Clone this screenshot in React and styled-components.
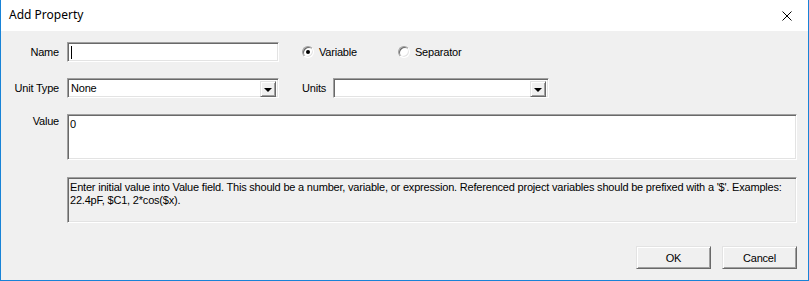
import React from "react";
import styled, { createGlobalStyle, css } from "styled-components";

const Global = createGlobalStyle`
  html, body { margin: 0; padding: 0; background: #ffffff; }
  * { box-sizing: border-box; }
`;

const FONT = `"Liberation Sans", Arial, sans-serif`;

const Window = styled.div`
  width: 809px;
  height: 281px;
  border: 1px solid #1883d7;
  border-top: none;
  display: flex;
  flex-direction: column;
  background: #f0f0f0;
  font-family: ${FONT};
  font-size: 11px;
  letter-spacing: -0.2px;
  color: #000;
`;

const TitleBar = styled.div`
  height: 31px;
  background: #fff;
  display: flex;
  align-items: center;
  justify-content: space-between;
  padding-left: 8px;
`;

const Title = styled.span`
  font-family: "Noto Sans", "Open Sans", sans-serif;
  font-size: 12px;
  letter-spacing: 0;
  color: #000;
  margin-top: -2px;
`;

const CloseBtn = styled.div`
  width: 46px;
  height: 31px;
  display: flex;
  align-items: center;
  justify-content: center;
  margin-right: -2px;
`;

const Body = styled.div`
  flex: 1;
  display: flex;
  flex-direction: column;
  padding: 11px 11px 0 0;
`;

const Row = styled.div`
  display: flex;
  align-items: ${(p) => (p.$top ? "flex-start" : "center")};
  margin-bottom: ${(p) => p.$mb || 0}px;
`;

const Label = styled.div`
  width: 58px;
  text-align: right;
  margin-right: 8px;
  padding-top: ${(p) => p.$pt || 0}px;
  white-space: nowrap;
`;

const sunken = css`
  border-style: solid;
  border-width: 1px;
  border-color: #a0a0a0 #ffffff #ffffff #a0a0a0;
  box-shadow: inset 1px 1px 0 #696969, inset -1px -1px 0 #e3e3e3;
`;

const Field = styled.div`
  ${sunken};
  width: ${(p) => p.$w}px;
  height: 20px;
  background: #fff;
  display: flex;
  align-items: center;
  padding-left: 3px;
  position: relative;
`;

const Caret = styled.span`
  display: block;
  width: 1px;
  height: 13px;
  background: #000;
`;

const DropBtn = styled.div`
  position: absolute;
  right: 2px;
  top: 2px;
  width: 16px;
  height: 16px;
  background: #f0f0f0;
  border-style: solid;
  border-width: 1px;
  border-color: #e3e3e3 #696969 #696969 #e3e3e3;
  box-shadow: inset 1px 1px 0 #fff, inset -1px -1px 0 #a0a0a0;
  display: flex;
  align-items: center;
  justify-content: center;
`;

const Arrow = styled.span`
  width: 0;
  height: 0;
  border-left: 4px solid transparent;
  border-right: 4px solid transparent;
  border-top: 4px solid #000;
  margin-top: 1px;
`;

const RadioGroup = styled.div`
  display: flex;
  align-items: center;
  margin-left: 23px;
`;

const RadioItem = styled.label`
  display: flex;
  align-items: center;
  margin-right: ${(p) => p.$mr || 0}px;
`;

const RadioCircle = styled.span`
  width: 12px;
  height: 12px;
  border-radius: 50%;
  background: #fff;
  border: 1px solid;
  border-color: #a0a0a0 #fff #fff #a0a0a0;
  box-shadow: inset 1px 1px 0 #696969, inset -1px -1px 0 #e3e3e3;
  display: flex;
  align-items: center;
  justify-content: center;
  margin-right: 5px;
`;

const Dot = styled.span`
  width: 4px;
  height: 4px;
  border-radius: 50%;
  background: #000;
`;

const UnitsLabel = styled.div`
  margin-left: 23px;
  margin-right: 7px;
`;

const TextArea = styled.div`
  ${sunken};
  flex: 1;
  height: 46px;
  background: #fff;
  padding: 3px 2px;
`;

const InfoBox = styled.div`
  ${sunken};
  height: 46px;
  margin-left: 66px;
  background: #f0f0f0;
  padding: 3px 2px;
  line-height: 13px;
`;

const Footer = styled.div`
  display: flex;
  justify-content: flex-end;
  gap: 11px;
  margin-top: 23px;
`;

const Button = styled.div`
  width: 75px;
  height: 23px;
  background: #f0f0f0;
  border-style: solid;
  border-width: 1px;
  border-color: #e3e3e3 #696969 #696969 #e3e3e3;
  box-shadow: inset 1px 1px 0 #fff, inset -1px -1px 0 #a0a0a0;
  display: flex;
  align-items: center;
  justify-content: center;
`;

export default function App() {
  return (
    <>
      <Global />
      <Window>
        <TitleBar>
          <Title>Add Property</Title>
          <CloseBtn>
            <svg width="10" height="10" viewBox="0 0 10 10">
              <path d="M0.5 0.5 L9.5 9.5 M9.5 0.5 L0.5 9.5" stroke="#000" strokeWidth="1" />
            </svg>
          </CloseBtn>
        </TitleBar>
        <Body>
          <Row $mb={16}>
            <Label>Name</Label>
            <Field $w={212}>
              <Caret />
            </Field>
            <RadioGroup>
              <RadioItem $mr={41}>
                <RadioCircle>
                  <Dot />
                </RadioCircle>
                Variable
              </RadioItem>
              <RadioItem>
                <RadioCircle />
                Separator
              </RadioItem>
            </RadioGroup>
          </Row>
          <Row $mb={16}>
            <Label>Unit Type</Label>
            <Field $w={212}>
              None
              <DropBtn>
                <Arrow />
              </DropBtn>
            </Field>
            <UnitsLabel>Units</UnitsLabel>
            <Field $w={216}>
              <DropBtn>
                <Arrow />
              </DropBtn>
            </Field>
          </Row>
          <Row $top $mb={17}>
            <Label $pt={1}>Value</Label>
            <TextArea>0</TextArea>
          </Row>
          <InfoBox>
            Enter initial value into Value field. This should be a number, variable, or expression. Referenced project
            variables should be prefixed with a '$'. Examples: 22.4pF, $C1, 2*cos($x).
          </InfoBox>
          <Footer>
            <Button>OK</Button>
            <Button>Cancel</Button>
          </Footer>
        </Body>
      </Window>
    </>
  );
}
